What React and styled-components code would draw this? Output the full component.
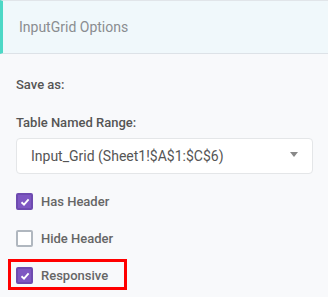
import React, { useState } from "react";
import styled, { createGlobalStyle } from "styled-components";

const GlobalStyle = createGlobalStyle`
  html, body {
    margin: 0;
    padding: 0;
    background: #f8f9fb;
    font-family: Roboto, "Liberation Sans", Arial, sans-serif;
  }
`;

const Panel = styled.section`
  width: 328px;
  height: 297px;
  background: #f8f9fb;
  overflow: hidden;
`;

const Header = styled.div`
  height: 52px;
  display: flex;
  align-items: center;
  padding-left: 16px;
  background: #f0f8fb;
  border-top: 1px solid #e1e5e9;
  border-bottom: 1px solid #dde2e7;
  border-left: 3px solid #4dd8c6;
  color: #8a8d90;
  font-size: 14px;
`;

const Body = styled.div`
  padding: 23px 15px 0 16px;
`;

const Label = styled.div`
  color: #555;
  font-size: 13px;
  font-weight: 500;
  margin-bottom: ${(p) => p.gap || 0}px;
`;

const Select = styled.div`
  height: 34px;
  display: flex;
  align-items: center;
  justify-content: space-between;
  padding: 0 13px 0 14px;
  background: #fff;
  border: 1px solid #e4e6e8;
  border-radius: 4px;
  color: #555;
  font-size: 14px;
  margin-bottom: 10px;
`;

const Caret = styled.span`
  width: 0;
  height: 0;
  border-left: 4px solid transparent;
  border-right: 4px solid transparent;
  border-top: 5px solid #888;
  margin-top: -3px;
  margin-right: 1px;
`;

const Options = styled.div`
  display: flex;
  flex-direction: column;
  gap: 2px;
`;

const Row = styled.label`
  position: relative;
  height: 35px;
  display: flex;
  align-items: center;
  gap: 8px;
  color: #666;
  font-size: 13px;
  font-weight: 500;
  cursor: pointer;
`;

const Highlight = styled.span`
  position: absolute;
  left: -8px;
  top: 1px;
  width: 113px;
  height: 25px;
  border: 3px solid #ff0000;
  pointer-events: none;
`;

const Box = styled.span`
  width: 17px;
  height: 17px;
  box-sizing: border-box;
  border-radius: 2px;
  display: flex;
  align-items: center;
  justify-content: center;
  background: ${(p) => (p.checked ? "#7e57c2" : "#fff")};
  border: 2px solid ${(p) => (p.checked ? "#6e4bb0" : "#b0b7bf")};
`;

function Check({ label, checked, boxed, onToggle }) {
  return (
    <Row onClick={onToggle}>
      <Box checked={checked}>
        {checked && (
          <svg width="10" height="10" viewBox="0 0 10 10">
            <path d="M1.5 5.3 L4 7.6 L8.6 2.4" fill="none" stroke="#fff" strokeWidth="1.9" />
          </svg>
        )}
      </Box>
      {label}
      {boxed && <Highlight />}
    </Row>
  );
}

export default function App() {
  const [opts, setOpts] = useState({ header: true, hide: false, responsive: true });
  const toggle = (k) => setOpts({ ...opts, [k]: !opts[k] });

  return (
    <>
      <GlobalStyle />
      <Panel>
        <Header>InputGrid Options</Header>
        <Body>
          <Label gap={23}>Save as:</Label>
          <Label gap={8}>Table Named Range:</Label>
          <Select>
            Input_Grid (Sheet1!$A$1:$C$6)
            <Caret />
          </Select>
          <Options>
            <Check label="Has Header" checked={opts.header} onToggle={() => toggle("header")} />
            <Check label="Hide Header" checked={opts.hide} onToggle={() => toggle("hide")} />
            <Check label="Responsive" checked={opts.responsive} boxed onToggle={() => toggle("responsive")} />
          </Options>
        </Body>
      </Panel>
    </>
  );
}
